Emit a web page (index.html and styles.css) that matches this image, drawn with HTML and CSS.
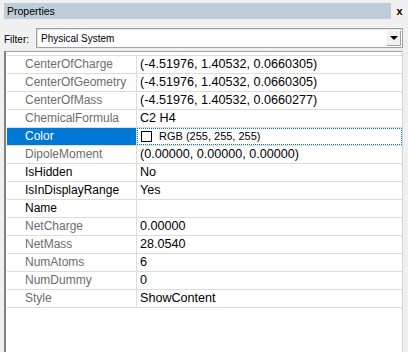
FILE: index.html
```html
<!DOCTYPE html>
<html lang="en">
<head>
  <meta charset="UTF-8" />
  <title>Properties</title>
  <link rel="stylesheet" href="styles.css">
</head>
<body>
  <div class="panel">
    <!-- Title bar -->
    <div class="title-row">
      <div class="title">Properties</div>
      <div class="close">x</div>
    </div>

    <!-- Filter -->
    <div class="filter-row">
      <span class="filter-label">Filter:</span>
      <div class="combo">
        <span class="combo-text">Physical System</span>
        <span class="combo-btn"><span class="arrow"></span></span>
      </div>
    </div>

    <!-- Property grid -->
    <div class="grid">
      <div class="rows">
        <div class="row"><div class="name ro">CenterOfCharge</div><div class="value">(-4.51976, 1.40532, 0.0660305)</div></div>
        <div class="row"><div class="name ro">CenterOfGeometry</div><div class="value">(-4.51976, 1.40532, 0.0660305)</div></div>
        <div class="row"><div class="name ro">CenterOfMass</div><div class="value">(-4.51976, 1.40532, 0.0660277)</div></div>
        <div class="row"><div class="name ro">ChemicalFormula</div><div class="value">C2 H4</div></div>
        <div class="row selected">
          <div class="name">Color</div>
          <div class="value focus"><span class="swatch"></span><span class="rgb">RGB (255, 255, 255)</span></div>
        </div>
        <div class="row"><div class="name ro">DipoleMoment</div><div class="value">(0.00000, 0.00000, 0.00000)</div></div>
        <div class="row"><div class="name">IsHidden</div><div class="value">No</div></div>
        <div class="row"><div class="name">IsInDisplayRange</div><div class="value">Yes</div></div>
        <div class="row"><div class="name">Name</div><div class="value"></div></div>
        <div class="row"><div class="name ro">NetCharge</div><div class="value">0.00000</div></div>
        <div class="row"><div class="name ro">NetMass</div><div class="value">28.0540</div></div>
        <div class="row"><div class="name ro">NumAtoms</div><div class="value">6</div></div>
        <div class="row"><div class="name ro">NumDummy</div><div class="value">0</div></div>
        <div class="row"><div class="name ro">Style</div><div class="value">ShowContent</div></div>
      </div>
    </div>
  </div>
</body>
</html>
```

FILE: styles.css
```css
* {
  margin: 0;
  padding: 0;
  box-sizing: border-box;
}

body {
  font-family: "Liberation Sans", Arial, sans-serif;
  background-color: #f0f0f0;
  color: #000;
}

.panel {
  display: flex;
  flex-direction: column;
  height: 352px;
}

/* title bar */
.title-row {
  display: flex;
  margin: 3px 0 0 4px;
  height: 16px;
}

.title {
  flex: 1;
  background-color: #bfcddb;
  font-size: 10.5px;
  line-height: 16px;
  padding-left: 3px;
}

.close {
  width: 17px;
  text-align: center;
  font-size: 11px;
  font-weight: bold;
  line-height: 17px;
}

/* filter */
.filter-row {
  display: flex;
  align-items: center;
  margin: 9px 5px 0 4px;
  height: 20px;
}

.filter-label {
  width: 32px;
  font-size: 10px;
  padding-top: 2px;
}

.combo {
  flex: 1;
  display: flex;
  align-items: center;
  height: 20px;
  background-color: #fff;
  border: 1px solid #a0a0a0;
  box-shadow: inset 1px 1px 0 #e3e3e3;
  padding: 1px;
}

.combo-text {
  flex: 1;
  font-size: 10px;
  padding-left: 3px;
  padding-top: 1px;
}

.combo-btn {
  width: 15px;
  height: 16px;
  background-color: #f0f0f0;
  border: 1px solid;
  border-color: #fff #a0a0a0 #a0a0a0 #fff;
  display: flex;
  align-items: center;
  justify-content: center;
}

.arrow {
  width: 0;
  height: 0;
  border-left: 4px solid transparent;
  border-right: 4px solid transparent;
  border-top: 4px solid #000;
}

/* property grid */
.grid {
  flex: 1;
  margin: 3px 5px 0 4px;
  background-color: #fff;
  border-left: 2px solid #808080;
  border-top: 1px solid #a0a0a0;
  border-right: 1px solid #d4d4d4;
  padding: 3px 0 0 1px;
}

.rows {
  border-bottom: 1px solid #dcdcdc;
}

.row {
  display: flex;
  height: 18px;
  border-top: 1px solid #dcdcdc;
}

.name {
  width: 130px;
  padding-left: 18px;
  font-size: 12px;
  line-height: 17px;
  border-right: 1px solid #dcdcdc;
  white-space: nowrap;
}

.name.ro {
  color: #6d6d6d;
}

.value {
  flex: 1;
  padding-left: 3px;
  font-size: 12.6px;
  line-height: 17px;
  white-space: nowrap;
}

.selected .name {
  background-color: #0078d7;
  color: #fff;
}

.value.focus {
  display: flex;
  align-items: center;
  border: 1px dotted #0078d7;
  padding-left: 3px;
}

.swatch {
  width: 11px;
  height: 11px;
  border: 1px solid #000;
  background-color: #fff;
}

.rgb {
  font-size: 11px;
  margin-left: 7px;
}
```
